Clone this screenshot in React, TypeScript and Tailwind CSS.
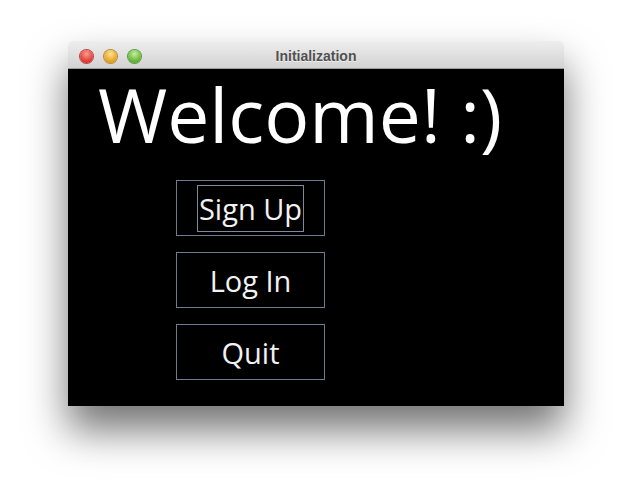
import React from "react";

function Light({ from, to, ring }: { from: string; to: string; ring: string }) {
  return (
    <div
      className="w-[13px] h-[13px] rounded-full"
      style={{
        background: `radial-gradient(circle at 50% 30%, ${from} 0%, ${to} 75%)`,
        boxShadow: `0 0 0 1px ${ring}`,
      }}
    />
  );
}

function Btn({ label, focus }: { label: string; focus?: boolean }) {
  return (
    <div className="w-[149px] h-[56px] border border-[#6d7c8c] flex items-center justify-center">
      <span
        className={
          focus
            ? "border border-[#7d8b99] px-[1px] h-[47px] flex items-center text-[29px] text-[#f2f2f2] leading-none"
            : "text-[29px] text-[#f2f2f2] leading-none"
        }
      >
        {label}
      </span>
    </div>
  );
}

export default function App() {
  return (
    <div className="w-[633px] h-[502px] bg-white overflow-hidden" style={{ fontFamily: '"Open Sans", "Noto Sans", sans-serif' }}>
      <div className="ml-[68px] mt-[41px] w-[496px] shadow-[0_24px_40px_rgba(0,0,0,0.55)] rounded-t-[5px]">
        <div className="h-[28px] pt-[3px] rounded-t-[5px] bg-gradient-to-b from-[#eeeeee] to-[#d2d2d2] border-b border-[#9e9e9e] flex items-center">
          <div className="flex gap-[11px] pl-[12px] items-center w-[90px]">
            <Light from="#ff9a8f" to="#d9302a" ring="#b8463f" />
            <Light from="#ffe48a" to="#e09a1b" ring="#b98a33" />
            <Light from="#c4f09a" to="#5aab2c" ring="#5c9a3b" />
          </div>
          <div
            className="flex-1 text-center pr-[90px] text-[14px] font-bold text-[#505050] leading-none"
            style={{ fontFamily: '"Liberation Sans", sans-serif', textShadow: "0 1px 0 rgba(255,255,255,0.6)" }}
          >
            Initialization
          </div>
        </div>
        <div className="h-[337px] bg-black">
          <div className="pl-[30px] pt-[8px] text-[75px] leading-none text-white">Welcome! :)</div>
          <div className="flex flex-col gap-[16px] ml-[108px] mt-[28px]">
            <Btn label="Sign Up" focus />
            <Btn label="Log In" />
            <Btn label="Quit" />
          </div>
        </div>
      </div>
    </div>
  );
}
